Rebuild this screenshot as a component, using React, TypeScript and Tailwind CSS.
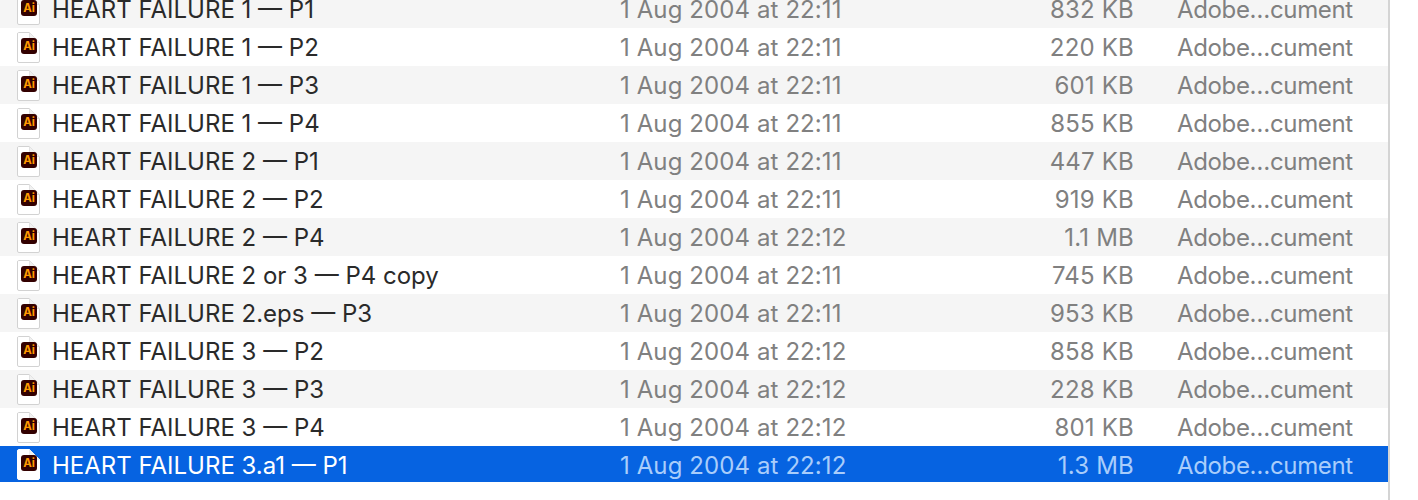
const files = [
  ['HEART FAILURE 1 — P1', '1 Aug 2004 at 22:11', '832 KB'],
  ['HEART FAILURE 1 — P2', '1 Aug 2004 at 22:11', '220 KB'],
  ['HEART FAILURE 1 — P3', '1 Aug 2004 at 22:11', '601 KB'],
  ['HEART FAILURE 1 — P4', '1 Aug 2004 at 22:11', '855 KB'],
  ['HEART FAILURE 2 — P1', '1 Aug 2004 at 22:11', '447 KB'],
  ['HEART FAILURE 2 — P2', '1 Aug 2004 at 22:11', '919 KB'],
  ['HEART FAILURE 2 — P4', '1 Aug 2004 at 22:12', '1.1 MB'],
  ['HEART FAILURE 2 or 3 — P4 copy', '1 Aug 2004 at 22:11', '745 KB'],
  ['HEART FAILURE 2.eps — P3', '1 Aug 2004 at 22:11', '953 KB'],
  ['HEART FAILURE 3 — P2', '1 Aug 2004 at 22:12', '858 KB'],
  ['HEART FAILURE 3 — P3', '1 Aug 2004 at 22:12', '228 KB'],
  ['HEART FAILURE 3 — P4', '1 Aug 2004 at 22:12', '801 KB'],
  ['HEART FAILURE 3.a1 — P1', '1 Aug 2004 at 22:12', '1.3 MB'],
];

function AiIcon({ selected }: { selected: boolean }) {
  return (
    <svg width="23" height="31" viewBox="0 0 23 31" className={`shrink-0 ${selected ? 'mt-[1px]' : ''}`}>
      <path
        d="M1.5 0.5H12.5L22.5 10.5V29a1.5 1.5 0 0 1-1.5 1.5H2A1.5 1.5 0 0 1 0.5 29V2A1.5 1.5 0 0 1 1.5 0.5Z"
        fill="#ffffff"
        stroke={selected ? '#ffffff' : '#d2d2d2'}
      />
      <path d="M12.5 0.5V9a1.5 1.5 0 0 0 1.5 1.5H22.5Z" fill="#f1f1f1" stroke={selected ? '#ececec' : '#e2e2e2'} />
      <rect x="4" y="6" width="16" height="16" rx="3" fill="#330000" />
      <text x="12" y="18.2" textAnchor="middle" fontSize="11.5" fontWeight="700" fill="#ff9a00" fontFamily="Inter, sans-serif">
        Ai
      </text>
    </svg>
  );
}

export default function App() {
  return (
    <div className="h-[500px] w-[1418px] overflow-hidden bg-white font-['Inter',sans-serif] text-[24px] leading-[38px]">
      <div className="-mt-[10px] h-[510px] w-[1390px] border-r-2 border-[#d4d4d4]">
        {files.map(([name, date, size], index) => {
          const selected = index === files.length - 1;
          const striped = index % 2 === 0;
          const muted = selected ? 'text-[#a9cdfb]' : 'text-[#808080]';
          const textTop = selected ? 'pt-[4px]' : 'pt-[2px]';
          return (
            <div
              key={name}
              className={`flex items-center ${selected ? 'h-[36px] bg-[#0663e1]' : 'h-[38px]'} ${!selected && striped ? 'bg-[#f5f5f5]' : ''}`}
            >
              <div className="ml-[17px] flex w-[35px] items-center">
                <AiIcon selected={selected} />
              </div>
              <div className={`w-[568px] whitespace-nowrap ${textTop} ${selected ? 'text-white' : 'text-[#2a2a2a]'}`}>{name}</div>
              <div className={`w-[300px] tracking-[0.1px] whitespace-nowrap ${textTop} ${muted}`}>{date}</div>
              <div className={`w-[214px] text-right tracking-[0.2px] whitespace-nowrap ${textTop} ${muted}`}>{size}</div>
              <div className={`ml-[43px] tracking-[-0.35px] whitespace-nowrap ${textTop} ${muted}`}>Adobe…cument</div>
            </div>
          );
        })}
      </div>
    </div>
  );
}
